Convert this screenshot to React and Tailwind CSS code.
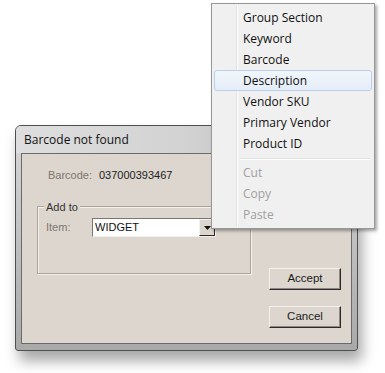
import React from 'react';

const menuItems = [
  { label: 'Group Section' },
  { label: 'Keyword' },
  { label: 'Barcode' },
  { label: 'Description', hover: true },
  { label: 'Vendor SKU' },
  { label: 'Primary Vendor' },
  { label: 'Product ID' },
];

const editItems = ['Cut', 'Copy', 'Paste'];

const ui = { fontFamily: '"Open Sans", "Noto Sans", sans-serif' };
const classic = { fontFamily: '"Liberation Sans", Arial, sans-serif' };

const Button = ({ children }) => (
  <button
    className="w-[72px] h-[22px] bg-[#dcd6ce] border border-t-[#f4f1ec] border-l-[#f4f1ec] border-r-[#2a2a2a] border-b-[#2a2a2a] text-[11.5px] text-[#1a1a1a] shadow-[inset_-1px_-1px_0_#8e8880]"
    style={classic}
  >
    {children}
  </button>
);

const App = () => {
  return (
    <div className="relative w-[385px] h-[373px] bg-white overflow-hidden">
      {/* Dialog */}
      <div className="absolute left-[15px] top-[125px] w-[343px] h-[226px] rounded-t-[6px] rounded-b-[3px] border border-[#4f4f4f] bg-gradient-to-b from-[#d9d9d9] to-[#a9a9a9] shadow-[4px_10px_14px_rgba(0,0,0,0.35)] flex flex-col">
        <div
          className="h-[27px] px-[8px] flex items-center text-[12px] text-[#111] bg-gradient-to-r from-[#dedede] via-[#d2d2d2] to-[#b4b4b4] rounded-t-[5px]"
          style={ui}
        >
          Barcode not found
        </div>
        <div className="flex-1 mx-[5px] mb-[6px] border border-[#6b6b6b] bg-[#dcd6ce] flex flex-col" style={classic}>
          <div className="flex items-center h-[15px] mt-[14px] ml-[26px] text-[11px]">
            <span className="text-[#7c7770] w-[51px]">Barcode:</span>
            <span className="text-[#222]">037000393467</span>
          </div>
          <div className="flex mt-[15px] ml-[15px] mr-[10px]">
            <div className="relative mt-[8px] w-[214px] h-[68px] border border-[#aaa49b] shadow-[inset_1px_1px_0_#f4f1ec,1px_1px_0_#f4f1ec]">
              <span className="absolute -top-[8px] left-[6px] px-[2px] bg-[#dcd6ce] text-[11px] text-[#333]">Add to</span>
              <div className="flex items-center mt-[11px] ml-[8px]">
                <span className="w-[46px] text-[11px] text-[#7c7770]">Item:</span>
                <div className="flex w-[124px] h-[19px] bg-white border border-t-[#7a7670] border-l-[#7a7670] border-r-[#f4f1ec] border-b-[#f4f1ec]">
                  <span className="flex-1 pl-[2px] text-[11px] leading-[17px] text-[#111]">WIDGET</span>
                  <span className="w-[16px] h-[17px] bg-[#dcd6ce] border border-r-[#2a2a2a] border-b-[#2a2a2a] border-t-[#f4f1ec] border-l-[#f4f1ec] flex items-center justify-center">
                    <svg width="7" height="4" viewBox="0 0 7 4"><path d="M0 0h7L3.5 4z" fill="#111" /></svg>
                  </span>
                </div>
              </div>
            </div>
            <div className="ml-auto flex flex-col gap-[16px] mt-[70px]">
              <Button>Accept</Button>
              <Button>Cancel</Button>
            </div>
          </div>
        </div>
      </div>

      {/* Context menu */}
      <div
        className="absolute left-[211px] top-[3px] w-[164px] py-[3px] bg-[#f0f0f0] border border-[#979797] shadow-[2px_2px_3px_rgba(0,0,0,0.35)] text-[12px]"
        style={ui}
      >
        <div className="absolute left-[24px] top-[2px] bottom-[2px] w-px bg-[#e2e2e2] shadow-[1px_0_0_#ffffff]" />
        {menuItems.map((item) => (
          <div
            key={item.label}
            className={`relative h-[21px] mx-[2px] flex items-center pl-[28px] text-[#111] rounded-[3px] ${
              item.hover ? 'bg-gradient-to-b from-[#f2f6fb] to-[#e4edf8] border border-[#b8d0ee]' : 'border border-transparent'
            }`}
          >
            {item.label}
          </div>
        ))}
        <div className="relative h-[8px] flex items-center ml-[28px] mr-[4px]">
          <div className="w-full h-px bg-[#e0e0e0] shadow-[0_1px_0_#ffffff]" />
        </div>
        {editItems.map((label) => (
          <div key={label} className="relative h-[21px] mx-[2px] flex items-center pl-[29px] text-[#a0a0a0]">
            {label}
          </div>
        ))}
      </div>
    </div>
  );
};

export default App;
